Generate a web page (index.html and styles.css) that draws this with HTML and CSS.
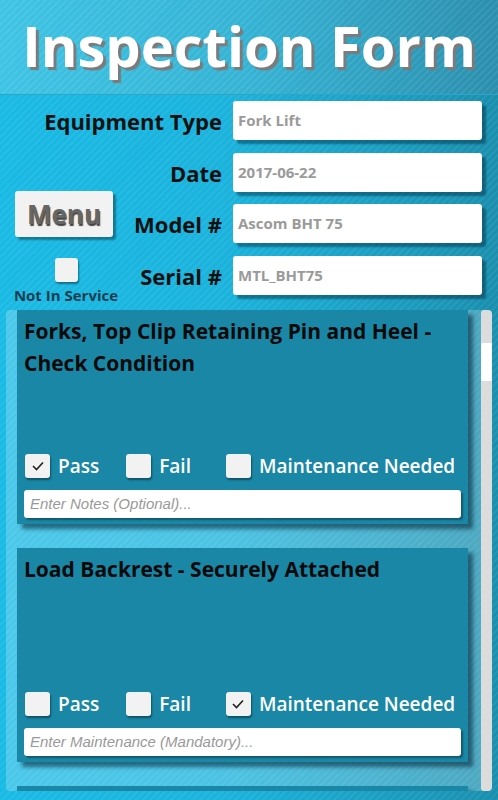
FILE: index.html
```html
<!DOCTYPE html>
<html lang="en">
<head>
    <meta charset="UTF-8">
    <title>Inspection Form</title>
    <link rel="stylesheet" href="styles.css">
</head>
<body>
<div class="header">
    <h1>Inspection Form</h1>
</div>
<div class="info">
    <div class="side">
        <div class="menu">Menu</div>
        <div class="service">
            <span class="box"></span>
            <span class="service-label">Not In Service</span>
        </div>
    </div>
    <label class="r1">Equipment Type</label>
    <div class="field r1">Fork Lift</div>
    <label class="r2">Date</label>
    <div class="field r2">2017-06-22</div>
    <label class="r3">Model #</label>
    <div class="field r3">Ascom BHT 75</div>
    <label class="r4">Serial #</label>
    <div class="field r4">MTL_BHT75</div>
</div>
<div class="list">
    <div class="items">
        <div class="card">
            <div class="card-title">Forks, Top Clip Retaining Pin and Heel - Check Condition</div>
            <div class="checks">
                <span class="check"><span class="box"><svg width="16" height="16" viewBox="0 0 16 16"><polyline points="3,8 6.5,11.5 13,4.5" fill="none" stroke="#222" stroke-width="1.6"/></svg></span>Pass</span>
                <span class="check"><span class="box"></span>Fail</span>
                <span class="check"><span class="box"></span>Maintenance Needed</span>
            </div>
            <div class="notes">Enter Notes (Optional)...</div>
        </div>
        <div class="card">
            <div class="card-title">Load Backrest - Securely Attached</div>
            <div class="checks">
                <span class="check"><span class="box"></span>Pass</span>
                <span class="check"><span class="box"></span>Fail</span>
                <span class="check"><span class="box"><svg width="16" height="16" viewBox="0 0 16 16"><polyline points="3,8 6.5,11.5 13,4.5" fill="none" stroke="#222" stroke-width="1.6"/></svg></span>Maintenance Needed</span>
            </div>
            <div class="notes">Enter Maintenance (Mandatory)...</div>
        </div>
        <div class="card"></div>
    </div>
    <div class="scrollbar"><span class="thumb"></span></div>
</div>
</body>
</html>
```

FILE: styles.css
```css
html, body{
    margin: 0;
    height: 800px;
    overflow: hidden;
}
body{
    font-family: "Open Sans", "Noto Sans", sans-serif;
    background:
        repeating-linear-gradient(-45deg, rgba(255,255,255,.06) 0 2px, rgba(255,255,255,0) 2px 5px),
        linear-gradient(to right, #19bae4 0%, #1ab3dc 45%, #1a8fae 100%);
}
.header{
    height: 94px;
    border-bottom: 1px solid #2aa6c8;
    background:
        repeating-linear-gradient(-45deg, rgba(255,255,255,.07) 0 2px, rgba(255,255,255,0) 2px 5px),
        linear-gradient(to right, #3ec4e4 0%, #35b3d4 50%, #2b8fad 100%);
    text-align: center;
}
.header h1{
    margin: 0;
    padding-top: 5px;
    font-size: 56px;
    line-height: 80px;
    font-weight: 700;
    color: #fff;
    text-shadow: 3px 3px 1px #7b7b7b;
}
.info{
    display: grid;
    grid-template-columns: 1fr 249px;
    grid-template-rows: repeat(4, 39px);
    row-gap: 12.5px;
    column-gap: 11px;
    height: 214px;
    padding: 6px 16px 0 15px;
    box-sizing: border-box;
}
.r1{ grid-row: 1; }
.r2{ grid-row: 2; }
.r3{ grid-row: 3; }
.r4{ grid-row: 4; }
.side{
    grid-column: 1;
    grid-row: 1 / 5;
    justify-self: start;
    padding-top: 90px;
}
.menu{
    width: 98px;
    height: 46px;
    background: #f2f2f2;
    border-radius: 3px;
    box-shadow: 3px 3px 2px rgba(0,0,0,.35);
    color: #666;
    font-size: 26px;
    font-weight: 700;
    line-height: 46px;
    text-align: center;
    text-shadow: 1px 2px 1px #444;
}
.service{
    display: flex;
    flex-direction: column;
    align-items: center;
    width: 106px;
    margin-left: -2px;
    margin-top: 21px;
}
.service .box{
    width: 23px;
    height: 24px;
    margin-right: 0;
}
.service-label{
    margin-top: 3px;
    font-size: 15px;
    font-weight: 700;
    color: #1c3e50;
    white-space: nowrap;
}
.info label{
    grid-column: 1;
    justify-self: end;
    font-size: 22px;
    font-weight: 700;
    color: #111;
    line-height: 40px;
    white-space: nowrap;
}
.field{
    grid-column: 2;
    background: #fff;
    border-radius: 3px;
    box-shadow: 4px 4px 2px rgba(0,40,60,.45);
    color: #9a9a9a;
    font-size: 15px;
    font-weight: 700;
    line-height: 39px;
    padding-left: 5px;
}
.list{
    display: flex;
    margin: 1px 6px 0 6px;
    height: 481px;
    border-radius: 4px;
    background: rgba(255,255,255,.22);
    overflow: hidden;
}
.items{
    flex: 1;
    padding: 0 12px 0 11px;
    overflow: hidden;
}
.card{
    height: 214px;
    margin-bottom: 24px;
    padding: 5px 7px 0 7px;
    box-sizing: border-box;
    background: #1a87a6;
    box-shadow: 5px 5px 4px rgba(0,30,45,.55);
}
.card-title{
    height: 139px;
    font-size: 21px;
    font-weight: 700;
    line-height: 32px;
    color: #0a0a0a;
}
.checks{
    display: flex;
    height: 24px;
    margin-left: 1px;
}
.check{
    display: flex;
    align-items: center;
    color: #fff;
    font-size: 19px;
    font-weight: 600;
    white-space: nowrap;
    margin-right: 27px;
}
.check:nth-child(2){
    margin-right: 35px;
}
.box{
    display: inline-flex;
    align-items: center;
    justify-content: center;
    flex: none;
    width: 25px;
    height: 24px;
    margin-right: 8px;
    background: #f2f2f2;
    border-radius: 3px;
    box-shadow: 1px 2px 2px rgba(0,0,0,.4);
}
.notes{
    margin-top: 12px;
    height: 28px;
    background: #fff;
    border-radius: 3px;
    box-shadow: 2px 2px 2px rgba(0,0,0,.35);
    font-family: "Liberation Sans", Arial, sans-serif;
    font-style: italic;
    font-size: 15px;
    color: #999;
    line-height: 28px;
    padding-left: 6px;
}
.scrollbar{
    width: 11px;
    margin: 0 0 0 1px;
    background: #dcdcdc;
    border-radius: 3px;
    position: relative;
}
.thumb{
    position: absolute;
    left: 0;
    right: 0;
    top: 33px;
    height: 38px;
    background: #fff;
    border-radius: 2px;
}
```
